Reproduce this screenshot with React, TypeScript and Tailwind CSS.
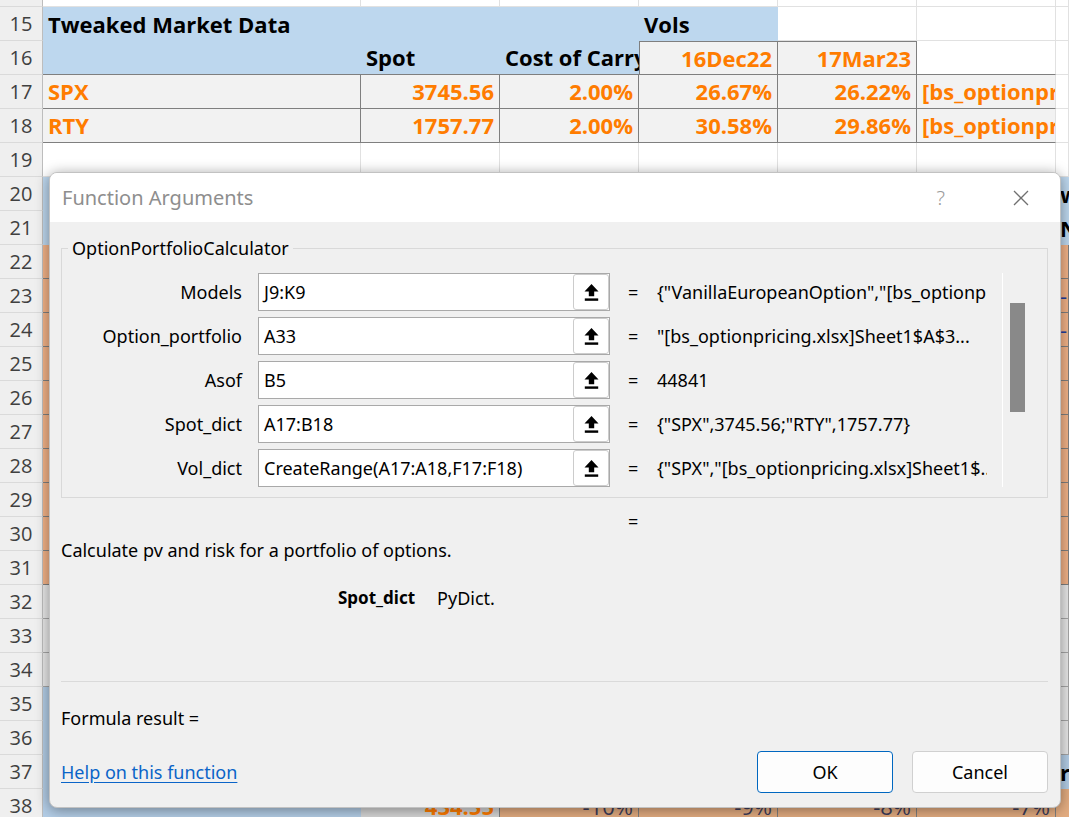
import type { ReactNode } from "react";

const COLS = "grid grid-cols-[43px_318px_139px_139px_139px_139px_139px_1fr]";

const WHITE = "bg-white border-r border-b border-[#e1e1e1]";
const BLUE = "bg-[#bdd7ee]";
const BOX = "bg-[#f2f2f2] border-r border-b border-[#7f7f7f]";
const ORANGE_FILL = "bg-[#f2b287] border-b border-r border-[#7f7f7f]";
const GREY_FILL = "bg-[#e8e8e8] border-b border-r border-[#a6a6a6]";
const DARK_BLUE = "bg-[#b3cde6]";

const ORANGE_TXT = "font-bold text-[#ff7c00]";

const RowHead = ({ n }: { n?: number }) => (
  <div className="flex items-center justify-center bg-[#efefef] border-r border-b border-r-[#bdbdbd] border-b-[#dadada] text-[20px] text-[#404040]">
    {n}
  </div>
);

const Cell = ({
  className = "",
  children,
}: {
  className?: string;
  children?: ReactNode;
}) => (
  <div
    className={`flex items-center overflow-hidden whitespace-nowrap px-[5px] ${className}`}
  >
    {children}
  </div>
);

type Lower = { n: number; fill: string; a?: string; g: string; gText?: ReactNode };

const lowerRows: Lower[] = [
  { n: 20, fill: BLUE, g: BLUE, gText: <span className="font-bold">wx</span> },
  { n: 21, fill: BLUE, g: BLUE, gText: <span className="font-bold">N</span> },
  { n: 22, fill: ORANGE_FILL, g: ORANGE_FILL },
  { n: 23, fill: ORANGE_FILL, g: ORANGE_FILL, gText: <span className="text-[#1f3f9f]">-</span> },
  { n: 24, fill: ORANGE_FILL, g: ORANGE_FILL, gText: <span className="text-[#1f3f9f]">-</span> },
  { n: 25, fill: ORANGE_FILL, g: ORANGE_FILL },
  { n: 26, fill: ORANGE_FILL, g: ORANGE_FILL },
  { n: 27, fill: ORANGE_FILL, g: ORANGE_FILL },
  { n: 28, fill: ORANGE_FILL, g: ORANGE_FILL },
  { n: 29, fill: ORANGE_FILL, g: ORANGE_FILL },
  { n: 30, fill: ORANGE_FILL, g: ORANGE_FILL },
  { n: 31, fill: ORANGE_FILL, g: ORANGE_FILL },
  { n: 32, fill: GREY_FILL, g: GREY_FILL },
  { n: 33, fill: GREY_FILL, g: GREY_FILL },
  { n: 34, fill: GREY_FILL, g: GREY_FILL },
  { n: 35, fill: GREY_FILL, a: DARK_BLUE, g: GREY_FILL },
  { n: 36, fill: GREY_FILL, a: DARK_BLUE, g: GREY_FILL },
  { n: 37, fill: DARK_BLUE, g: DARK_BLUE, gText: <span className="font-bold">r</span> },
];

const UpIcon = () => (
  <svg width="15" height="17" viewBox="0 0 15 17">
    <path d="M7.5 0 L14.5 7.5 L10.2 7.5 L10.2 12.2 L4.8 12.2 L4.8 7.5 L0.5 7.5 Z" fill="#000" />
    <rect x="0.8" y="14.4" width="13.4" height="2.4" fill="#000" />
  </svg>
);

const fields = [
  { label: "Models", input: "J9:K9", value: '{"VanillaEuropeanOption","[bs_optionpricing.xlsx]' },
  { label: "Option_portfolio", input: "A33", value: '"[bs_optionpricing.xlsx]Sheet1$A$3...' },
  { label: "Asof", input: "B5", value: "44841" },
  { label: "Spot_dict", input: "A17:B18", value: '{"SPX",3745.56;"RTY",1757.77}' },
  { label: "Vol_dict", input: "CreateRange(A17:A18,F17:F18)", value: '{"SPX","[bs_optionpricing.xlsx]Sheet1$...' },
];

const Sheet = () => (
  <div className="font-['Open_Sans',sans-serif] text-[22px] text-black">
    {/* row 14, cut off */}
    <div className={`${COLS} h-[7px]`}>
      <RowHead />
      <div className={WHITE} />
      <div className={WHITE} />
      <div className={WHITE} />
      <div className={WHITE} />
      <div className={WHITE} />
      <div className={WHITE} />
      <div className={WHITE} />
    </div>
    {/* row 15 */}
    <div className={`${COLS} h-[34px]`}>
      <RowHead n={15} />
      <Cell className={`${BLUE} font-bold`}>Tweaked Market Data</Cell>
      <Cell className={BLUE} />
      <Cell className={BLUE} />
      <Cell className={`${BLUE} font-bold`}>Vols</Cell>
      <Cell className={WHITE} />
      <Cell className={WHITE} />
      <Cell className={WHITE} />
    </div>
    {/* row 16 */}
    <div className={`${COLS} h-[34px]`}>
      <RowHead n={16} />
      <Cell className={`${BLUE} border-b border-[#7f7f7f]`} />
      <Cell className={`${BLUE} border-b border-[#7f7f7f] font-bold`}>Spot</Cell>
      <Cell className={`${BLUE} border-b border-[#7f7f7f] font-bold`}>Cost of Carry</Cell>
      <Cell className={`${BOX} border-t border-l justify-end ${ORANGE_TXT}`}>16Dec22</Cell>
      <Cell className={`${BOX} border-t justify-end ${ORANGE_TXT}`}>17Mar23</Cell>
      <Cell className="bg-white border-r border-r-[#e1e1e1] border-b border-b-[#7f7f7f]" />
      <Cell className={WHITE} />
    </div>
    {/* rows 17, 18 */}
    {[
      { n: 17, name: "SPX", spot: "3745.56", vols: ["26.67%", "26.22%"] },
      { n: 18, name: "RTY", spot: "1757.77", vols: ["30.58%", "29.86%"] },
    ].map((r) => (
      <div key={r.n} className={`${COLS} h-[34px]`}>
        <RowHead n={r.n} />
        <Cell className={`${BOX} ${ORANGE_TXT}`}>{r.name}</Cell>
        <Cell className={`${BOX} justify-end ${ORANGE_TXT}`}>{r.spot}</Cell>
        <Cell className={`${BOX} justify-end ${ORANGE_TXT}`}>2.00%</Cell>
        <Cell className={`${BOX} justify-end ${ORANGE_TXT}`}>{r.vols[0]}</Cell>
        <Cell className={`${BOX} justify-end ${ORANGE_TXT}`}>{r.vols[1]}</Cell>
        <Cell className={`bg-[#f2f2f2] border-b border-b-[#7f7f7f] border-r border-r-[#e1e1e1] ${ORANGE_TXT}`}>
          [bs_optionpricing.xlsx]Sheet1
        </Cell>
        <Cell className={WHITE} />
      </div>
    ))}
    {/* row 19 */}
    <div className={`${COLS} h-[34px]`}>
      <RowHead n={19} />
      <Cell className={WHITE} />
      <Cell className={WHITE} />
      <Cell className={WHITE} />
      <Cell className={WHITE} />
      <Cell className={WHITE} />
      <Cell className={WHITE} />
      <Cell className={WHITE} />
    </div>
    {/* rows behind the dialog */}
    {lowerRows.map((r) => (
      <div key={r.n} className={`${COLS} h-[34px]`}>
        <RowHead n={r.n} />
        <Cell className={r.a ?? r.fill} />
        <Cell className={r.fill} />
        <Cell className={r.fill} />
        <Cell className={r.fill} />
        <Cell className={r.fill} />
        <Cell className={r.fill} />
        <Cell className={`${r.g} !px-[4px]`}>{r.gText}</Cell>
      </div>
    ))}
    {/* row 38 */}
    <div className={`${COLS} h-[34px]`}>
      <RowHead n={38} />
      <Cell className={DARK_BLUE} />
      <Cell className={`bg-[#d6d6d6] border-r border-[#7f7f7f] justify-end ${ORANGE_TXT}`}>434.55</Cell>
      <Cell className="bg-[#e3ac80] border-r border-[#7f7f7f] justify-end text-[#3c3c5a]">-10%</Cell>
      <Cell className="bg-[#e3ac80] border-r border-[#7f7f7f] justify-end text-[#3c3c5a]">-9%</Cell>
      <Cell className="bg-[#e3ac80] border-r border-[#7f7f7f] justify-end text-[#3c3c5a]">-8%</Cell>
      <Cell className="bg-[#e3ac80] border-r border-[#7f7f7f] justify-end text-[#3c3c5a]">-7%</Cell>
      <Cell className="bg-[#e3ac80]" />
    </div>
  </div>
);

const Dialog = () => (
  <div className="absolute left-[49px] top-[172px] w-[1012px] h-[636px] flex flex-col overflow-hidden rounded-[8px] border border-[#c2c2c2] bg-[#f0f0f0] shadow-[0_2px_14px_rgba(0,0,0,0.4)] font-['Noto_Sans',sans-serif] text-[18px] text-black">
    <div className="flex h-[49px] items-center bg-white pl-[12px] pr-[31px]">
      <span className="text-[20px] text-[#8e8e8e]">Function Arguments</span>
      <span className="ml-auto text-[20px] font-light text-[#9a9a9a]">?</span>
      <svg className="ml-[68px]" width="16" height="16" viewBox="0 0 16 16">
        <path d="M1 1 L15 15 M15 1 L1 15" stroke="#707070" strokeWidth="1.3" />
      </svg>
    </div>

    <div className="flex flex-1 flex-col pl-[11px] pr-[12px] pt-[13px]">
      <fieldset className="border border-[#d9d9d9] pb-[10px]">
        <legend className="ml-[6px] px-[4px] leading-[26px]">OptionPortfolioCalculator</legend>
        <div className="flex pt-[12px]">
          <div className="flex flex-1 flex-col gap-[6px]">
            {fields.map((f) => (
              <div key={f.label} className="flex h-[38px] items-center">
                <div className="w-[180px] text-right">{f.label}</div>
                <div className="ml-[16px] flex h-[38px] w-[352px] items-center border border-[#a9a9a9] bg-white">
                  <span className="flex-1 overflow-hidden whitespace-nowrap pl-[5px]">{f.input}</span>
                  <span className="flex h-[36px] w-[36px] items-center justify-center rounded-[3px] border border-[#cccccc] bg-white">
                    <UpIcon />
                  </span>
                </div>
                <span className="ml-[18px] w-[10px]">=</span>
                <span className="ml-[19px] w-[330px] overflow-hidden whitespace-nowrap">{f.value}</span>
              </div>
            ))}
          </div>
          <div className="mr-[13px] w-[32px] border-l border-white">
            <div className="ml-[7px] mt-[30px] h-[109px] w-[15px] bg-[#898989]" />
          </div>
        </div>
      </fieldset>

      <div className="mt-[10px] h-[24px] pl-[567px]">=</div>
      <div className="mt-[5px] h-[24px]">Calculate pv and risk for a portfolio of options.</div>
      <div className="mt-[24px] flex h-[24px] pl-[277px]">
        <span className="text-[17px] font-bold">Spot_dict</span>
        <span className="ml-[22px]">PyDict.</span>
      </div>
      <div className="mt-[72px] h-px bg-[#dadada]" />
      <div className="mt-[23px] h-[24px]">Formula result =</div>
      <div className="mt-[22px] flex h-[42px] items-center">
        <span className="text-[#0a64c8] underline underline-offset-[3px]">Help on this function</span>
        <button className="ml-auto h-[42px] w-[136px] rounded-[4px] border border-[#0067c0] bg-[#fdfdfd]">
          OK
        </button>
        <button className="ml-[19px] h-[42px] w-[136px] rounded-[4px] border border-[#d0d0d0] bg-[#fdfdfd]">
          Cancel
        </button>
      </div>
    </div>
  </div>
);

export default function App() {
  return (
    <div className="relative h-[817px] w-[1069px] overflow-hidden bg-white">
      <Sheet />
      <Dialog />
    </div>
  );
}
